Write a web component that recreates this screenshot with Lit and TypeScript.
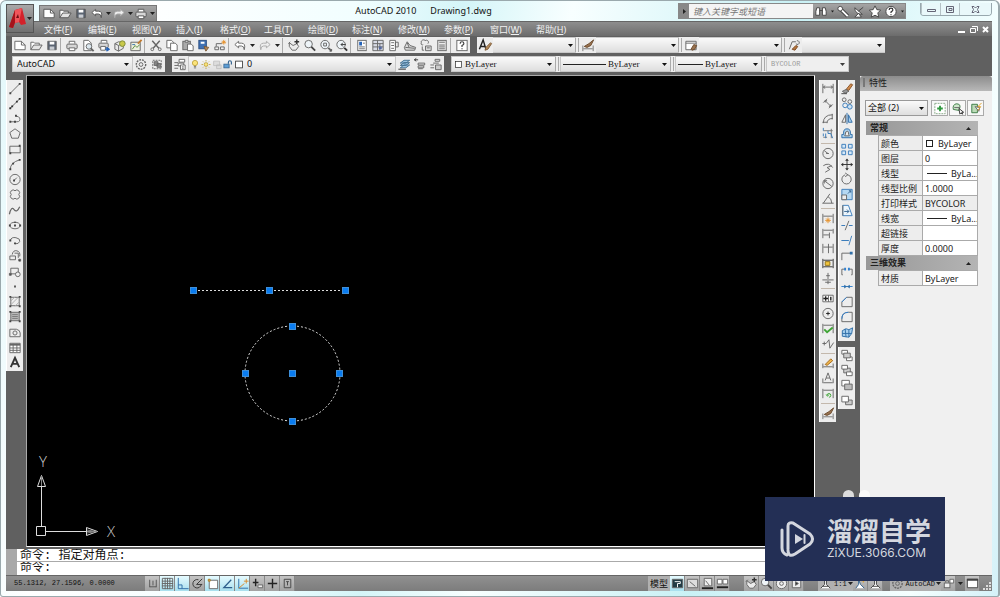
import { LitElement, html, svg, css, nothing } from "lit";
import { customElement, property } from "lit/decorators.js";

const ICONS: Record<string, unknown> = {
  // files
  new: svg`<path d="M2.500 3.500h7l4 4v5h-11z" fill="#fff"/><path d="M9.500 3.500v4h4"/>`,
  open: svg`<path d="M2.500 12.500v-8h3l1 1h5v2" fill="#fff"/><path d="M2.500 12.500l3-5h9l-3 5z" fill="#e4e4e4"/>`,
  save: svg`<path d="M3.500 3.500h9v9h-9z" fill="#5a6472"/><path d="M5.500 4h5v3h-5z" fill="#fff" stroke="none"/><path d="M5.500 9h5v3.500h-5z" fill="#c8ccd2" stroke="none"/>`,
  print: svg`<path d="M5 6V3.500h6V6" fill="#fff"/><rect x="2.500" y="6.500" width="11" height="5" rx="1" fill="#d6d6d6"/><path d="M5 10.500h6v3H5z" fill="#fff"/>`,
  preview: svg`<path d="M3.500 13.500v-11h5l3 3v8z" fill="#fff"/><circle cx="9" cy="9" r="3" fill="#dce8f0"/><path d="M11 11l3 3" stroke-width="2"/>`,
  publish: svg`<path d="M5 5V2.500h6V5" fill="#fff"/><rect x="2.500" y="5.500" width="10" height="5" rx="1" fill="#d6d6d6"/><path d="M4.500 9h5v4h-5z" fill="#fff"/><path d="M9 12h4m-2-2l3 2-3 2z" stroke="#2563b8" fill="#2563b8"/>`,
  dwf: svg`<path d="M2.500 6l4-2 5 1v6l-5 3-4-2z" fill="#e8e8e8"/><path d="M6.500 8v6m0-6l5-3m-5 3l-4-2"/><circle cx="10.500" cy="6" r="3" fill="#c9c94a" stroke="#7d8a3a"/>`,
  map: svg`<path d="M2.500 4.500h10v9h-10z" fill="#eef0e0"/><path d="M4 12l3-4 2 2 3-3" stroke="#5b8a3c"/><path d="M10 6l4-4" stroke="#c07a30" stroke-width="2"/><path d="M4 7h3" stroke="#3d78b0"/>`,
  cut: svg`<path d="M4 3l7 8M12 3l-7 8" stroke-width="1.500"/><circle cx="4" cy="12" r="1.500"/><circle cx="12" cy="12" r="1.500"/>`,
  copyclip: svg`<path d="M2.500 2.500h5l2 2v6h-7z" fill="#fff"/><path d="M6.500 5.500h5l2 2v6h-7z" fill="#fff"/>`,
  paste: svg`<rect x="2.500" y="3.500" width="8" height="9" fill="#aaa"/><path d="M5 2.500h3v2H5z" fill="#eee"/><path d="M7.500 6.500h4l2 2v5h-6z" fill="#fff"/>`,
  match: svg`<rect x="2.500" y="2.500" width="8" height="9" fill="#3f71b3" stroke="#2c4f82"/><path d="M4.500 4h4v2h-4z" fill="#fff" stroke="none"/><path d="M8 9l5 1-3 4z" fill="#b58a5c" stroke="#7c5a34"/>`,
  block: svg`<path d="M2.500 9.500h4v3h-4zM8.500 9.500h4v3h-4z"/><path d="M4 9V6h6"/><path d="M12 2v5M9.500 4.500h5M10.500 3l3 3m0-3l-3 3" stroke="#e5912c"/>`,
  undo: svg`<path d="M6.500 3.500l-4 3.500 4 3.500V8.500h3q3 0 3 4 2-7-3-7h-3z" fill="#fff"/>`,
  redo: svg`<path d="M9.500 3.500l4 3.500-4 3.500V8.500h-3q-3 0-3 4-2-7 3-7h3z" fill="#eee" stroke="#aaa"/>`,
  pan: svg`<path d="M3 5l4 3 4-2 2 3-3 4H6L3 9z" fill="#ececec"/><path d="M11 1.500v5M8.500 4h5" stroke="#333" stroke-width="1.500"/><path d="M2 6l2-2"/>`,
  zoom: svg`<circle cx="6.500" cy="6.500" r="4" fill="#eef4f8"/><path d="M9.500 9.500l4 4" stroke="#444" stroke-width="2"/>`,
  zoomwin: svg`<circle cx="7" cy="7" r="4.500" fill="#eef4f8"/><path d="M5.500 5.500h3v3h-3z"/><path d="M10.500 10.500l3 3" stroke-width="2"/><path d="M14 12v2h-2z" fill="#333"/>`,
  zoomprev: svg`<circle cx="7" cy="7" r="4.500" fill="#eef4f8"/><path d="M10.500 10.500l3 3" stroke="#333" stroke-width="2"/><path d="M12 7H7m2-2L7 7l2 2" stroke="#333"/>`,
  props: svg`<rect x="3.500" y="2.500" width="9" height="11" fill="#fff"/><path d="M5 4h3v4H5z" fill="#2563b8" stroke="none"/><path d="M9 5.500h2M5 9.500h6M5 11.500h6"/>`,
  dcenter: svg`<path d="M2.500 2.500h11v11h-11zM7.500 2.500v11M2.500 6h11M10 6v7M2.500 9.500h11" fill="#d9dce6"/><path d="M9 9h3v3H9z" fill="#5468a0" stroke="none"/>`,
  palettes: svg`<path d="M3.500 2.500h6v11h-6z" fill="#fff"/><path d="M9.500 4.500h3v5h-3zM5 5h3M5 8h3M5 11h3"/>`,
  sheet: svg`<path d="M2 10l3-6 3 4 6 2-1 3H3z" fill="#ddd"/><path d="M3 10l10 1M5 5l2 5"/>`,
  markup: svg`<path d="M3 5c-1-3 4-4 4-2 2-2 5 1 3 3M3 5c-1 2 1 3 2 2"/><path d="M7.500 8.500h6v5h-6zM9 10.500h3" fill="#ddd"/><path d="M4 9v4h2"/>`,
  calc: svg`<rect x="3.500" y="2.500" width="9" height="11" fill="#ececec"/><path d="M5 4.500h6M5 7.500h6M5 9.500h6M5 11.500h6"/>`,
  help: svg`<rect x="2.500" y="2.500" width="11" height="11" fill="#fff"/><path d="M6 6q0-2 2-2t2 2q0 1-2 2v1.500M8 11v1" stroke="#444" stroke-width="1.300"/>`,
  textstyle: svg`<path d="M2 12l4-10 3 10M3 9h5" stroke="#222" stroke-width="1.500"/><path d="M9 10l5-5 1 1-4 6-3 1z" fill="#b58a5c" stroke="#7c5a34"/>`,
  dimstyle: svg`<path d="M2.500 8v6M13.500 8v6M3 11.500h10" stroke="#777"/><path d="M4 9l5-3 5-4-3 6-4 2z" fill="#9a7350" stroke="#6a4a2c"/>`,
  tablestyle: svg`<path d="M2.500 3.500h11v9h-11zM2.500 5.500h11" fill="#fff"/><path d="M8 12l3-5 3 1-2 4-3 1z" fill="#9a7350" stroke="#6a4a2c"/>`,
  leaderstyle: svg`<path d="M3 12l3-8h4M11 3a2 2 0 1 1-1 3"/><path d="M6 12l4-4 2 1-3 4z" fill="#b5763c" stroke="#7c4a24"/>`,
  gear: svg`<circle cx="8" cy="8" r="5" stroke-dasharray="2 1" stroke-width="1.500"/><circle cx="8" cy="8" r="2"/>`,
  wsave: svg`<path d="M3.500 3.500h9v9h-9z" stroke-dasharray="2 1"/><path d="M5 5h4v4H5zM8 7h4v4H8z" fill="#888"/>`,
  layers: svg`<path d="M7 2.500h6v3H7zM6 6.500h6v3H6z" fill="#fff"/><path d="M2 6h4M2 9h4M2 12h4"/><path d="M8.500 8.500h5v5h-5zM10 10.500h2M10 12h2" fill="#fff"/>`,
  bulb: svg`<circle cx="8" cy="6" r="3.500" fill="#fbe47a" stroke="#b79a2c"/><path d="M6.500 10.500h3M6.500 12.500h3" stroke="#555"/>`,
  sun: svg`<circle cx="8" cy="8" r="2.500" fill="#fbe47a" stroke="#b79a2c"/><path d="M8 2v2M8 12v2M2 8h2M12 8h2M4 4l1 1M11 11l1 1M4 12l1-1M11 5l1-1" stroke="#b79a2c"/>`,
  vpfreeze: svg`<path d="M3.500 3.500h8v6h-8zM7.500 8.500h6v5h-6z" fill="#ddd" stroke="#bbb"/>`,
  unlock: svg`<rect x="2.500" y="7.500" width="7" height="5" fill="#5f9fd6" stroke="#2f5f8c"/><path d="M8.500 7V5q0-2 2-2t2 2v3" stroke="#2f5f8c" stroke-width="1.500"/>`,
  swatch: svg`<rect x="3.500" y="3.500" width="9" height="9" fill="#fff" stroke="#222"/>`,
  laycur: svg`<path d="M4 9l4-3h6l-4 3zM4 11.500l4-3h6l-4 3zM4 6.500l4-3h6l-4 3z" fill="#9cc5e4" stroke="#44708f"/><path d="M2 13h8" stroke="#333"/>`,
  layprev: svg`<path d="M6 6.500h7v2H6zM6 9.500h6v2H6zM6 12.500h5"/><path d="M2 3h4M4 1.500L2 3l2 1.500" stroke="#333"/>`,
  laystate: svg`<path d="M7 2.500h5v2H7zM5 6.500h6"/><path d="M2 8.500h4M2 11.500h4"/><path d="M7.500 8.500h6v5h-6z" fill="#ccc"/>`,
  // draw
  line: svg`<path d="M3 13L13 3"/><path d="M2 12h2v2H2zM12 2h2v2h-2z" fill="#444" stroke="none"/>`,
  xline: svg`<path d="M2 14L14 2"/><path d="M4 10h2v2H4zM9 5h2v2H9zM12 2h2v2h-2zM2 12h2v2H2z" fill="#333" stroke="none"/>`,
  pline: svg`<path d="M3 11.500h7q4 0 3-4-1-2-4-2"/><path d="M8 4h2v2H8zM2 10.500h2v2H2zM7 10.500h2v2H7z" fill="#444" stroke="none"/>`,
  polygon: svg`<path d="M8 3l5.500 4-2 6h-7l-2-6z"/>`,
  rect: svg`<path d="M2.500 4.500h11v7h-11z"/><path d="M12 3h2v2h-2zM2 11h2v2H2z" fill="#444" stroke="none"/>`,
  arc: svg`<path d="M3 13q0-7 10-10"/><path d="M2 12h2v2H2zM5 6h2v2H5zM12 2h2v2h-2z" fill="#444" stroke="none"/>`,
  circle: svg`<circle cx="8" cy="8" r="5.500"/><path d="M7 9l3-3"/><path d="M6 8h2v2H6z" fill="#444" stroke="none"/>`,
  cloud: svg`<path d="M8 4a2.700 2.700 0 1 1 4 4 2.700 2.700 0 1 1-4 4 2.700 2.700 0 1 1-4-4 2.700 2.700 0 1 1 4-4z"/>`,
  spline: svg`<path d="M2 12q2-9 5-5t6-3" stroke-width="1.300"/>`,
  ellipse: svg`<ellipse cx="8" cy="8" rx="5.500" ry="3.500"/><path d="M1.500 7h2v2h-2zM7 7h2v2H7zM12.500 7h2v2h-2zM7 4h2v1H7z" fill="#444" stroke="none"/>`,
  elarc: svg`<path d="M3 8q1-4 6-3t4 4q-1 3-5 2.500"/><path d="M2 7h2v2H2zM7 10h2v2H7z" fill="#444" stroke="none"/>`,
  insert: svg`<path d="M2.500 8.500h6v4h-6z"/><path d="M5 7q1-5 5-4t3 6M7.500 5.500h4v5"/><path d="M12 12h2v2h-2z" fill="#222"/>`,
  makeblock: svg`<path d="M3.500 4.500h8v6h-8z"/><circle cx="11" cy="11" r="2.500" fill="#eee"/><path d="M2 10h2v2H2z" fill="#444"/>`,
  point: svg`<path d="M7 7h2v2H7z" fill="#555" stroke="none"/>`,
  hatch: svg`<path d="M3.500 3.500h9v9h-9z"/><path d="M3 8l5-5M3 12l9-9M8 13l5-5" stroke="#aaa"/><path d="M2 2h2v2H2zM12 2h2v2h-2zM2 12h2v2H2zM12 12h2v2h-2z" fill="#444" stroke="none"/>`,
  gradient: svg`<path d="M3.500 3.500h9v9h-9z" fill="#bbb"/><path d="M5 6h6M5 8h6M5 10h6" stroke="#777"/><path d="M2 2h2v2H2zM12 2h2v2h-2zM2 12h2v2H2zM12 12h2v2h-2z" fill="#444" stroke="none"/>`,
  region: svg`<path d="M2.500 4.500h7q4 1 4 4v4h-11z"/><circle cx="8" cy="8.500" r="2.200"/>`,
  table: svg`<path d="M2.500 3.500h11v10h-11z" fill="#fff"/><path d="M2.500 5h11" stroke-width="2"/><path d="M2.500 8.500h11M2.500 11h11M6 4v9M10 4v9"/>`,
  mtext: svg`<path d="M3.500 13L8 3l4.500 10M5 9.500h6" stroke="#333" stroke-width="2"/>`,
  // dimensions
  dlin: svg`<path d="M2.500 3v10M13.500 3v10M3 6.500h10"/><path d="M5 5L3 6.500 5 8M11 5l2 1.500L11 8"/>`,
  dali: svg`<path d="M5 5l6 6M3 7l4-4M9 13l4-4"/><path d="M5 7V5h2M11 9v2H9"/>`,
  darc: svg`<path d="M3 13q0-9 10-9M7 13q0-5 6-5M2 12h5M12.500 3v6"/>`,
  dord: svg`<path d="M3 5h10M3 12h4M11.500 3v10" stroke="#777"/><path d="M3 2v3M5.500 8v5M3 8v3M8 5v3h3l2 5" stroke="#3c7dbb"/>`,
  drad: svg`<circle cx="8" cy="8" r="5.500"/><path d="M8 8L4 5M6 8h3"/>`,
  djog: svg`<path d="M3 5q6-4 10 2M12 5l-5 2 3 2-5 3" />`,
  ddia: svg`<circle cx="8" cy="8" r="5.500"/><path d="M4 5l8 6M4 8V5h3"/>`,
  dang: svg`<path d="M3 13L10 3M2 13h12M8 6q4 2 4 7"/>`,
  quick: svg`<path d="M2.500 3v10M13.500 3v10M3 5.500h10"/><path d="M8 7v6M5 10h6M6 8l4 4m0-4l-4 4" stroke="#e5912c"/>`,
  base: svg`<path d="M2.500 3v10M13.500 3v5M9.500 7v6M3 4.500h10M3 9.500h6"/>`,
  cont: svg`<path d="M2.500 3v10M8.500 3v10M13.500 3v10M3 6.500h10"/>`,
  space: svg`<path d="M2.500 3v10M13.500 3v10M3 4.500h10M3 11.500h10" stroke="#333"/><path d="M5 6h5v4H5z" fill="#f3c53b" stroke="#8f7218"/>`,
  dbreak: svg`<path d="M2 9.500h5M9 9.500h5M8 2v12M6 5h4M5 12h6"/>`,
  tol: svg`<path d="M2.500 4.500h11v7h-11zM8.500 4.500v7" fill="#fff"/><path d="M3 8h5M5.500 5.500v5M11 6v4" stroke="#222" stroke-width="1.500"/>`,
  cmark: svg`<circle cx="8" cy="8" r="5.500"/><path d="M8 6v4M6 8h4" stroke="#222"/>`,
  insp: svg`<path d="M2.500 3v10M13.500 3v10M3 4.500h10"/><path d="M4 9l3 3 6-5" stroke="#3fa535" stroke-width="2"/>`,
  jogl: svg`<path d="M2 8h4M4 6v4M6 8l3-4 1 9 4-6"/>`,
  dedit: svg`<path d="M2.500 8v5M13.500 8v5M3 11.500h10"/><path d="M5 9l6-6 2 2-6 5z" fill="#f0b64c" stroke="#a26a20"/>`,
  dtedit: svg`<path d="M2.500 8v5M13.500 8v5M3 12.500h10"/><path d="M5 10l3-8 3 8M6 7.500h4"/>`,
  dupd: svg`<path d="M2.500 3v10M13.500 3v10M3 4.500h10"/><path d="M7 10a2 2 0 1 1 2 2M6 9l1.500 2L9 9" stroke="#3fa535"/>`,
  // modify
  erase: svg`<path d="M7 9l5-6 2 1-4 6z" fill="#d08c50" stroke="#8b5528"/><path d="M3 11l4-2 3 2-4 2z" fill="#999"/><path d="M2 13.500h6" stroke="#444"/>`,
  copy: svg`<circle cx="5" cy="4" r="2"/><circle cx="11" cy="6" r="2"/><circle cx="6" cy="10" r="2.500" stroke="#3c7dbb"/><circle cx="11" cy="11.500" r="2.500" stroke="#3c7dbb" fill="#cfe4f5"/>`,
  mirror: svg`<path d="M6.500 4v8h-4z"/><path d="M9.500 4v8h4z" fill="#a9d0ee" stroke="#2f6ea8"/><path d="M8 2v12" stroke="#2f6ea8"/>`,
  offset: svg`<path d="M2.500 12.500V9h2q-1-6 3.500-6t3.500 6h2v3.500z" fill="#a9d0ee" stroke="#2f6ea8"/><path d="M5.500 10.500q1-1 1-4 3-2 3 0 0 3 1 4z" fill="#eee"/>`,
  array: svg`<path d="M2.500 2.500h4v4h-4zM9.500 2.500h4v4h-4zM2.500 9.500h4v4h-4zM9.500 9.500h4v4h-4z" stroke="#3c7dbb" fill="#d6e9f8"/>`,
  move: svg`<path d="M8 3v10M3 8h10" stroke="#333"/><path d="M8 1.500L6 4h4zM8 14.500L6 12h4zM1.500 8L4 6v4zM14.500 8L12 6v4z" fill="#333" stroke="none"/>`,
  rotate: svg`<path d="M9 3a5 5 0 1 1-3 0"/><path d="M6 1l3 2-3 2"/>`,
  scale: svg`<path d="M2.500 2.500h11v11h-11z" fill="#b5d8f2" stroke="#3c7dbb"/><path d="M2.500 8.500h5v5h-5z" fill="#eee"/><path d="M9 7l3-3M10 4h2v2" stroke="#2f5f8c"/>`,
  stretch: svg`<path d="M3.500 2.500h6l4 11h-10z" stroke="#3c7dbb" fill="#eef6fc"/><path d="M3.500 2.500v11"/><path d="M5 9h5M8 7l2 2-2 2" stroke="#2f5f8c"/>`,
  trim: svg`<path d="M2 8h4M10 8h4" stroke="#3c7dbb" stroke-width="1.300"/><path d="M10 3L6 13"/>`,
  extend: svg`<path d="M2 8h8" stroke="#3c7dbb" stroke-width="1.300"/><path d="M13 3l-3 10" stroke="#3c7dbb"/>`,
  breakpt: svg`<path d="M2.500 13V5.500H12"/><path d="M11 4h3v3h-3z" fill="#2f6ea8" stroke="none"/>`,
  breakm: svg`<path d="M3.500 11.500h-1v-6h4M9.500 5.500h4v6h-1"/><path d="M5 4h2v3H5zM9 4h2v3H9z" fill="#2f80d0" stroke="none"/>`,
  join: svg`<path d="M2 8h12" stroke="#2f80d0"/><path d="M5 6l3 2-3 2zM11 6L8 8l3 2z" fill="#2f6ea8" stroke="none"/>`,
  chamfer: svg`<path d="M2.500 13.500v-5l5-5h6v10z" /><path d="M2.500 8.500l5-5" stroke="#2f80d0"/>`,
  fillet: svg`<path d="M2.500 13.500v-3q0-7 7-7h4v10z"/><path d="M2.500 10.500q0-7 7-7" stroke="#2f80d0"/>`,
  explode: svg`<path d="M3 6l4-2 3 1 4-2-1 6-3 4-7-1z" fill="#a9d0ee" stroke="#2f6ea8"/><path d="M6 4l1 9M10 5v8M3 9h10" stroke="#2f6ea8"/>`,
  front: svg`<path d="M2.500 2.500h6v4h-6zM7.500 9.500h6v4h-6z" fill="#fff"/><path d="M4.500 5.500h7v5h-7z" fill="#ccc"/>`,
  back: svg`<path d="M4.500 5.500h7v5h-7z" fill="#ccc"/><path d="M2.500 2.500h6v4h-6zM7.500 9.500h6v4h-6z" fill="#fff"/>`,
  above: svg`<path d="M2.500 2.500h8v6h-8z" fill="#fff"/><path d="M5.500 6.500h8v6h-8z" fill="#bbb"/>`,
  under: svg`<path d="M6.500 7.500h7v5h-7z" fill="#ccc"/><path d="M2.500 3.500h7v6h-7z" fill="#fff"/>`,
  // palette buttons
  pick: svg`<path d="M2.500 2.500h11v11h-11z" fill="#fff" stroke="#8a8" stroke-dasharray="2 1"/><path d="M8 5v6M5 8h6" stroke="#2f9a3f" stroke-width="2"/>`,
  selobj: svg`<path d="M3 9q-1-5 3-6 5 0 4 4l-1 3z" fill="#cfe8cc" stroke="#3b7a44"/><path d="M4 7h6"/><path d="M9 8l5 4h-2l1 2-2-1-1 1z" fill="#fff" stroke="#333"/>`,
  qsel: svg`<path d="M3.500 3.500h6v9h-6z" fill="#bcdcb8" stroke="#3b7a44"/><path d="M7 6l4 5 1-4z" fill="#fff"/><path d="M14 2l-4 4h3l-3 4" stroke="#e0a02c"/>`,
  // info center
  bino: svg`<path d="M3.500 4h3v8h-4v-4zM9.500 4h3l1 4v4h-4zM6.500 7h3" fill="#fff" stroke="#444"/>`,
  key: svg`<path d="M6 6l7 7" stroke="#444" stroke-width="4"/><path d="M6 6l7 7" stroke="#fff" stroke-width="2"/><circle cx="5" cy="5" r="2.500" fill="#fff" stroke="#444"/>`,
  dish: svg`<path d="M3.500 4q0 7 8 7z" fill="#fff" stroke="#444"/><path d="M7.500 7.500l5-4" stroke="#444"/><path d="M3.500 14h7l-3-4z" fill="#fff" stroke="#444"/>`,
  star: svg`<path d="M8 2l2 4 4 .500-3 3 1 4.500-4-2-4 2 1-4.500-3-3L6 6z" fill="#fff" stroke="#444"/>`,
  helpc: svg`<circle cx="8" cy="8" r="5.500" fill="#fff" stroke="#444"/><path d="M6 6.500q0-2 2-2t2 2q0 1-2 2v1M8 11v1" stroke="#333" stroke-width="1.300"/>`,
  // status
  snap: svg`<path d="M5 4v8M5 11.500h7M12 4v8M8.500 5v5" stroke="#555"/>`,
  grid: svg`<path d="M2.500 2.500h11v11h-11zM5.500 2v12M8 2v12M10.500 2v12M2 5.500h12M2 8h12M2 10.500h12" stroke="#666"/>`,
  ortho: svg`<path d="M3.500 2v11.500h11M3.500 9.500h4v4" stroke="#2f6ea8"/>`,
  polar: svg`<path d="M12 9a4.500 4.500 0 1 1-3-5" stroke="#333"/><path d="M7 9l6-6M7 9h6" stroke="#333"/>`,
  osnap: svg`<path d="M4.500 4.500h9v9h-9z" fill="#fff"/><path d="M3.500 3.500h2v2h-2z" fill="#f0c060" stroke="#a77b22"/>`,
  otrack: svg`<path d="M12 4l-8 8.500h9" stroke="#2f5f8c" stroke-width="1.300"/>`,
  ducs: svg`<path d="M4 3v10h10" stroke="#2f6ea8"/><path d="M4 13l6-5M12 3v5M9.500 5.500h5" stroke="#d98a2a"/>`,
  dyn: svg`<path d="M6 3v8M3 7h6" stroke="#222" stroke-width="1.500"/><path d="M8.500 9.500h5v3h-5z" fill="#eee"/>`,
  lwt: svg`<path d="M8 3v10M3 8h10" stroke="#222" stroke-width="1.500"/>`,
  qp: svg`<path d="M4.500 3.500h7v9h-7zM8 6v4M6.500 6h3" stroke="#444"/>`,
  model: svg`<path d="M2.500 3.500h11v9h-11z" fill="#223c46"/><path d="M5 6h6v2H8v4" stroke="#fff"/>`,
  layout: svg`<path d="M2.500 3.500h11v9h-11z" fill="#ddd"/><path d="M5 6l6 5"/>`,
  qvl: svg`<path d="M4.500 2.500h8v8h-8z" fill="#eee"/><path d="M6 5l4 5"/><path d="M2 13h12" stroke="#222" stroke-width="2"/>`,
  qvd: svg`<path d="M2.500 3.500h5v5h-5zM8.500 3.500h5v5h-5z" fill="#fff"/><path d="M2 12h12" stroke="#222" stroke-width="2"/>`,
  wheel: svg`<circle cx="8" cy="8" r="5.500" fill="#eee"/><circle cx="8" cy="8" r="2"/>`,
  motion: svg`<path d="M3.500 3.500h9v9h-9z" fill="#eee"/><path d="M7 6l3 2-3 2z" fill="#333"/>`,
  anno: svg`<path d="M3 13l4-4V3h2v6l4 4M5 11h6" fill="#fff" stroke="#444"/>`,
  annov: svg`<path d="M3 13l3-4V4l2 5 4 4" fill="#fff" stroke="#2f5f8c"/><path d="M11 3v4M9 5h4" stroke="#e0a02c"/>`,
  lock: svg`<rect x="3.500" y="7.500" width="6" height="5" fill="#eee"/><path d="M5 7V5h3v2"/><path d="M9.500 3.500h4v4h-4z" fill="#fff"/>`,
  clean: svg`<path d="M2.500 3.500h11v9h-11z" fill="#fff" stroke="#444"/><path d="M2 4h12" stroke="#444" stroke-width="2"/>`,
};

const icon = (name: string) => html`<svg class="ic" viewBox="0 0 16 16" aria-hidden="true">${ICONS[name]}</svg>`;
const ib = (name: string, cls = "") => html`<button class="ib ${cls}" aria-label=${name}>${icon(name)}</button>`;
const arrow = html`<svg class="dd" viewBox="0 0 5 3" aria-hidden="true"><path d="M0 0h5L2.500 3z" /></svg>`;
const sep = html`<span class="sep"></span>`;
const ddb = (name: string) => html`<button class="ddb" aria-label=${name}>${arrow}</button>`;

/** Renders a run of tool names: "|" is a separator, "v" an attached drop-down. */
const run = (spec: string) =>
  spec.split(" ").map((n) => (n === "|" ? sep : n === "v" ? ddb("more") : ib(n)));

const combo = (cls: string, label: string, value: string, lead: unknown = nothing) => html`
  <label class="combo ${cls}">${lead}<select aria-label=${label}><option>${value}</option></select></label>`;

const shared = css`
  :host { box-sizing: border-box; }
  *, *::before, *::after { box-sizing: border-box; }
  button { appearance: none; border: 0; padding: 0; margin: 0; background: none; font: inherit; color: inherit; }
  .ic { width: 16px; height: 15px; display: block; fill: none; stroke: #666; stroke-width: 1; flex: none; }
  .ib { width: 16px; height: 15px; display: grid; place-items: center; flex: none; }
  .dd { width: 5px; height: 3px; fill: #222; display: block; }
  .ddb { width: 9px; height: 15px; display: grid; place-items: center; flex: none; }
  .sep { width: 4px; height: 15px; flex: none; border-left: 1px solid #aaa; margin-left: 0; }
  .combo { display: flex; align-items: center; min-width: 0; height: 16px; background: linear-gradient(#fafafa, #dedede); border: 1px solid #c8c8c8; }
  .combo select {
    appearance: none; border: 0; margin: 0; padding: 0 12px 0 4px; flex: 1; min-width: 0; height: 14px; border-radius: 0; outline: 0;
    font: inherit; color: #111; background: url("data:image/svg+xml,%3Csvg xmlns='http://www.w3.org/2000/svg' width='5' height='3'%3E%3Cpath d='M0 0h5L2.500 3z' fill='%23111'/%3E%3C/svg%3E") no-repeat right 3px center;
  }
`;

@customElement("tool-column")
class ToolColumn extends LitElement {
  @property({ attribute: false }) groups: string[][] = [];
  @property({ type: Boolean, reflect: true }) ruled = false;
  static styles = [shared, css`
    :host { display: flex; flex-direction: column; width: 17px; padding: 1px 0; gap: 1px; background: #ededed; border: 0 solid #fff; border-left-width: 1px; }
    :host([ruled]) { gap: 5px; }
    .group { display: flex; flex-direction: column; position: relative; }
    :host([ruled]) .group + .group::before { content: ""; position: absolute; left: 1px; right: 1px; top: -3px; border-top: 1px solid #c3b8ac; }
  `];
  render() {
    return this.groups.map((g) => html`<div class="group">${g.map((n) => ib(n))}</div>`);
  }
}

@customElement("props-palette")
class PropsPalette extends LitElement {
  static styles = [shared, css`
    :host { display: block; background: #f0f0f0; font: 9px/14px "Noto Sans", "Noto Sans CJK SC", sans-serif; color: #222; }
    .title { height: 15px; padding-left: 3px; display: flex; gap: 4px; background: linear-gradient(#8c8c8c, #b8b8b8); border-radius: 3px 3px 0 0; }
    .title::before { content: ""; width: 2px; height: 9px; margin-top: 2px; border: 1px solid #777; border-width: 0 1px; }
    .bar { display: flex; gap: 1px; padding: 9px 8px 5px 5px; align-items: center; }
    .combo { flex: 1; margin-right: 2px; border-color: #999; }
    .combo select { padding-left: 2px; }
    .ib { width: 17px; height: 16px; border: 1px solid #aaa; background: #f8f8f8; }
    .sheet { margin: 0 14px 0 6px; }
    table { width: 100%; border-collapse: collapse; table-layout: fixed; }
    .head { width: 100%; height: 14px; padding: 0 7px 0 4px; display: flex; justify-content: space-between; align-items: center; background: linear-gradient(90deg, #989898, #b4b4b4); font-weight: bold; }
    .head .dd { transform: rotate(180deg); }
    .rows { padding-left: 12px; }
    th, td { height: 15px; padding: 0 0 0 2px; border: 1px solid #aaa; font-weight: normal; text-align: left; line-height: 13px; white-space: nowrap; overflow: hidden; }
    th { width: 44px; background: #ededed; }
    td { background: #fff; }
    td.off { background: #ededed; }
    .line { display: inline-block; width: 20px; height: 1px; background: #222; vertical-align: 3px; margin: 0 4px 0 2px; }
    .box { display: inline-block; width: 7px; height: 7px; border: 1px solid #222; margin: 0 5px 0 1px; }
  `];
  private section(name: string, rows: [string, unknown, string?][]) {
    return html`
      <button class="head"><span>${name}</span>${arrow}</button>
      <div class="rows"><table>${rows.map(([k, v, c]) => html`<tr><th scope="row">${k}</th><td class=${c ?? ""}>${v}</td></tr>`)}</table></div>`;
  }
  render() {
    const dash = html`<span class="line"></span>`;
    return html`
      <div class="title">特性</div>
      <div class="bar">${combo("", "选择", "全部 (2)")}${ib("pick")}${ib("selobj")}${ib("qsel")}</div>
      <div class="sheet">
        ${this.section("常规", [
          ["颜色", html`<span class="box"></span>ByLayer`],
          ["图层", "0"],
          ["线型", html`${dash}ByLa...`],
          ["线型比例", "1.0000"],
          ["打印样式", "BYCOLOR", "off"],
          ["线宽", html`${dash}ByLa...`],
          ["超链接", ""],
          ["厚度", "0.0000"],
        ])}
        ${this.section("三维效果", [["材质", "ByLayer"]])}
      </div>`;
  }
}

@customElement("drawing-area")
class DrawingArea extends LitElement {
  static styles = css`
    :host { display: block; position: relative; background: #000; overflow: hidden; }
    svg { position: absolute; left: 0; fill: none; stroke: #ddd; }
    .model { top: 0; width: 400px; height: 360px; }
    .ucs { bottom: 0; width: 100px; height: 100px; }
    .ent { stroke-dasharray: 2 2; }
    .grip { fill: #0a7cf0; stroke: #3f8fd8; }
    text { fill: #ccc; stroke: none; font: 300 15px "Open Sans", sans-serif; text-anchor: middle; }
  `;
  render() {
    const grips = [[166, 214], [242, 214], [318, 214], [265, 250], [265, 297], [218, 297], [312, 297], [265, 345]];
    return html`
      <svg class="model" viewBox="0 0 400 360">
        <path class="ent" d="M167 214.500h152" />
        <circle class="ent" cx="265.500" cy="297.500" r="47.500" />
        ${grips.map(([x, y]) => svg`<rect class="grip" x=${x - 2.5} y=${y - 2.5} width="6" height="6"/>`)}
      </svg>
      <svg class="ucs" viewBox="0 0 100 100">
        <path d="M9.500 80.500h9v9h-9zM14.500 80V34M19 85.500h51" />
        <path d="M10.500 40.500l4-11 4 11zM59.500 81.500l11 4-11 4z" />
        <path d="M14.500 30v10M60 85.500h10M60 84l9 1.500-9 1.500" stroke="#888" />
        <text x="16" y="21">Y</text><text x="84" y="91">X</text>
      </svg>`;
  }
}

const MENUS: [string, string][] = [
  ["文件", "F"], ["编辑", "E"], ["视图", "V"], ["插入", "I"], ["格式", "O"], ["工具", "T"],
  ["绘图", "D"], ["标注", "N"], ["修改", "M"], ["参数", "P"], ["窗口", "W"], ["帮助", "H"],
];

@customElement("app-root")
class AppRoot extends LitElement {
  static styles = [shared, css`
    :host {
      display: flex; flex-direction: column; height: 100vh; position: relative; padding: 0 6px 5px 5px; overflow: hidden;
      font: 9px/14px "Noto Sans", "Noto Sans CJK SC", sans-serif; color: #111;
      background: linear-gradient(100deg, #e2f8fb 0%, #fff 12%, #f2feff 32%, #d4f5f8 42%, #f8ffff 52%, #c9f1f5 72%, #f5ffff 92%, #d4f1f8 100%);
      border: 1px solid #9aa9ad; border-width: 1px 2px 1px 1px; border-radius: 6px 6px 3px 3px;
    }
    .head { display: grid; grid-template-columns: 33px 1fr; grid-template-rows: 20px 15px; flex: none; }
    .app { grid-area: 1 / 1 / 3 / 2; z-index: 1; width: 28px; height: 29px; margin-top: 3px; display: flex; align-items: center; background: linear-gradient(#a8a8a8, #707070); border: 1px solid #555; }
    .app .logo { width: 20px; height: 25px; }
    .title { grid-area: 1 / 2; display: flex; align-items: center; justify-content: space-between; }
    .qat { display: flex; align-items: center; height: 17px; padding: 0 1px; margin-top: 4px; background: linear-gradient(#a5a5a5, #858585); border: 1px solid #777; }
    .qat .ddb { width: 6px; }
    .qat .ic { stroke: #555; }
    .name { margin: 0; font-size: 9px; font-weight: normal; white-space: pre; padding-left: 12px; }
    .search { display: flex; align-items: center; height: 16px; border: 1px solid #888; }
    .search .go { width: 10px; height: 14px; background: #888; display: grid; place-items: center; }
    .search .go .dd { transform: rotate(-90deg); }
    .search input { width: 124px; height: 14px; padding: 0 4px; border: 0; border-radius: 0; background: #f4f4f4; font: italic 9px "Noto Sans", "Noto Sans CJK SC", sans-serif; }
    .search input::placeholder { color: #777; opacity: 1; }
    .info { display: flex; align-items: center; height: 14px; padding: 0; background: linear-gradient(#a5a5a5, #7b7b7b); }
    .info .ddb { width: 6px; }
    .info .dd { width: 3px; }
    .spacer { flex: 1; }
    .right { display: flex; gap: 14px; }
    .win { display: flex; height: 13px; border: 1px solid #98a8ae; border-top: 0; border-radius: 0 0 4px 4px; overflow: hidden; }
    .win button { width: 19px; display: grid; place-items: center; border-left: 1px solid #b5c2c6; background: #e9f8fa; }
    .win button:last-child { width: 32px; }
    .win svg, .mdi svg { width: 11px; height: 9px; fill: none; stroke: #667; }
    nav { grid-area: 2 / 1 / 3 / 3; display: flex; align-items: center; padding-left: 38px; background: linear-gradient(#8e8e8e, #6c6c6c); border-top: 1px solid #666; color: #f2f2f2; }
    nav .item { width: 44px; text-align: left; line-height: 13px; white-space: nowrap; }
    nav .item.wide { width: 46px; }
    .mdi { margin-left: auto; display: flex; gap: 1px; padding-right: 1px; }
    .mdi svg { stroke: #fff; stroke-width: 2; display: block; }
    .mdi .thin { stroke-width: 1; }

    .bars { flex: none; background: #606060; padding: 1px 0 3px 6px; display: grid; gap: 3px; }
    .row { display: flex; gap: 7px; height: 16px; }
    .bar { display: flex; align-items: center; background: #ededed; height: 16px; }
    .bar > .ib { height: 16px; }
    .grip { width: 4px; height: 14px; border: 1px solid #aaa; border-width: 0 1px; flex: none; margin: 0 1px 0 -1px; }
    .style { width: 83px; border-width: 1px 0; }
    .ws { width: 121px; }
    .layer { width: 208px; gap: 0; }
    .layer .ic { width: 12px; margin-right: -1px; }
    .layer select { padding-left: 3px; }
    .ser { font-family: "Liberation Serif", serif; }
    .col { width: 105px; }
    .col .ic { width: 11px; margin-left: 1px; }
    .col select { padding-left: 1px; }
    .lt { width: 111px; } .lt .rule { width: 43px; }
    .lw { width: 87px; } .lw .rule { width: 25px; }
    .lw select { padding-left: 2px; }
    .lt select { padding-left: 2px; }
    .rule { height: 1px; background: #222; margin-left: 2px; flex: none; }
    .pc { width: 83px; font: 7px "Liberation Mono", monospace; background: #efefef; }
    .pc select { color: #888; opacity: .8; }

    .work { flex: 1; display: flex; min-height: 0; background: #606060; }
    .main { flex: 1; display: flex; flex-direction: column; min-width: 0; }
    .stage { flex: 1; display: flex; min-height: 0; }
    tool-column { flex: none; }
    .left { padding: 5px 3px 0 0; display: flex; align-items: flex-start; }
    drawing-area { flex: 1; border: 1px solid #aaa; border-right-color: #fff; border-bottom-color: #fff; }
    .docks { display: flex; gap: 2px; align-items: flex-start; padding: 5px 5px 0 4px; }
    .stack { display: flex; flex-direction: column; gap: 6px; }
    props-palette { width: 132px; flex: none; margin-top: 1px; }
    .cmd { flex: none; display: grid; grid-template-columns: 11px 1fr; margin-top: 2px; background: #a8a8a8; }
    .cmd .hist, .cmd input { font: 12px/15px "Liberation Mono", "Noto Sans CJK SC", monospace; color: #111; background: #fff; padding: 0 0 0 3px; white-space: pre; }
    .cmd .hist { height: 13px; overflow: hidden; border-bottom: 1px solid #aaa; grid-column: 2; }
    .cmd input { height: 13px; width: 100%; border: 0; border-radius: 0; grid-column: 2; }

    .status { flex: none; height: 16px; display: flex; align-items: center; background: linear-gradient(#909090, #7c7c7c); border-top: 1px solid #666; }
    .coords { width: 139px; padding-left: 8px; font: 7px/15px "Liberation Mono", monospace; white-space: pre; }
    .status .ib, .status .ic { width: 15px; }
    .status .ib { height: 15px; background: linear-gradient(#c4c4c4, #a2a2a2); border-right: 1px solid #888; }
    .status .ib.on { background: linear-gradient(#e6fbff, #a8dfee); }
    .txt { height: 15px; padding: 0 2px; background: #b0b0b0; display: flex; align-items: center; gap: 4px; white-space: nowrap; }
    .mono { font: 7px "Liberation Mono", monospace; padding: 0; gap: 1px; }
    .cluster { display: flex; margin-right: 14px; }
    .cluster.near { margin-right: 7px; }
    .cluster.end { margin-right: 2px; }
    .tips { width: 10px; height: 10px; align-self: flex-end; fill: #ddd; }

    .mark { position: absolute; right: 53px; bottom: 15px; width: 180px; height: 84px; background: #232f55; display: flex; align-items: center; gap: 12px; padding-left: 15px; color: #d4d7df; }
    .mark .play { width: 35px; height: 38px; fill: none; stroke: #d4d7df; stroke-width: 3; stroke-linejoin: round; stroke-linecap: round; flex: none; }
    .mark strong { display: block; font: 700 26px/28px "Liberation Sans", "Noto Sans CJK SC", sans-serif; white-space: nowrap; }
    .mark span { display: block; font: 12px/14px "Inter", sans-serif; white-space: nowrap; }
    .mark::before { content: ""; position: absolute; left: 78px; top: -7px; width: 11px; height: 7px; border-radius: 6px 6px 0 0; background: #ddd; box-shadow: 16px 0 #fafafa; }
  `];

  render() {
    const line = html`<span class="rule"></span>`;
    return html`
      <header class="head">
        <button class="app" aria-label="AutoCAD">
          <svg class="logo" viewBox="0 0 20 25"><path d="M2 21L8 4l7-2 4 16-5 1-2-3-4 1-2 5z" fill="#d3222a"/><path d="M8 4l7-2-3 14-4 1z" fill="#f0555a"/><path d="M9 12l2-4 1 4z" fill="#6d0e12"/><path d="M2 21l6-17 0 12-2 6z" fill="#a4141b"/></svg>
          ${arrow}
        </button>
        <div class="title">
          <div class="qat">${run("new open save undo v redo v print v")}</div>
          <span class="spacer"></span>
          <h1 class="name">AutoCAD 2010      Drawing1.dwg</h1>
          <span class="spacer"></span>
          <div class="right">
            <form class="search" role="search">
              <button type="button" class="go" aria-label="展开">${arrow}</button>
              <input type="search" aria-label="搜索" placeholder="键入关键字或短语" />
              <div class="info">${run("bino v key dish star helpc v")}</div>
            </form>
            <div class="win">
              <button aria-label="最小化"><svg viewBox="0 0 11 9"><path d="M1.500 4.500h8v2h-8z"/></svg></button>
              <button aria-label="还原"><svg viewBox="0 0 11 9"><path d="M1.500 1.500h7v6h-7zM4 3.500h3v2H4z"/></svg></button>
              <button aria-label="关闭"><svg viewBox="0 0 11 9"><path d="M2 1.500h2l1.500 1.500L7 1.500h2L7.500 4.500 9 7.500H7L5.500 6 4 7.500H2l1.500-3z"/></svg></button>
            </div>
          </div>
        </div>
        <nav>
          ${MENUS.map(([t, k]) => html`<button class="item ${"MPNW".includes(k) ? "wide" : ""}">${t}(<u>${k}</u>)</button>`)}
          <div class="mdi">
            <button aria-label="最小化文档"><svg viewBox="0 0 11 9"><path d="M2 7h7"/></svg></button>
            <button aria-label="还原文档"><svg class="thin" viewBox="0 0 11 9"><path d="M2.500 3.500h5v4h-5zM4 1.500h5.500V6"/></svg></button>
            <button aria-label="关闭文档"><svg viewBox="0 0 11 9"><path d="M3 2l5 5M8 2L3 7"/></svg></button>
          </div>
        </nav>
      </header>

      <div class="bars">
        <div class="row">
          <div class="bar">${run("new open save | print preview publish dwf map | cut copyclip paste match block | undo v redo v | pan zoom zoomwin zoomprev | props dcenter palettes sheet markup calc | help")}</div>
          <div class="bar">
            ${ib("textstyle")}${combo("style", "文字样式", "")}
            <span class="grip"></span>${ib("dimstyle")}${combo("style", "标注样式", "")}
            <span class="grip"></span>${ib("tablestyle")}${combo("style", "表格样式", "")}
            <span class="grip"></span>${ib("leaderstyle")}${combo("style", "引线样式", "")}
          </div>
        </div>
        <div class="row">
          <div class="bar">${combo("ws", "工作空间", "AutoCAD")}${ib("gear")}${ib("wsave")}</div>
          <div class="bar">
            ${ib("layers")}
            ${combo("layer", "图层", "0", html`${["bulb", "sun", "vpfreeze", "unlock", "swatch"].map((n) => icon(n))}`)}
            ${run("laycur layprev laystate")}
          </div>
          <div class="bar ser">
            ${combo("col", "颜色", "ByLayer", icon("swatch"))}<span class="grip"></span>
            ${combo("lt", "线型", "ByLayer", line)}<span class="grip"></span>
            ${combo("lw", "线宽", "ByLayer", line)}<span class="grip"></span>
            ${combo("pc", "打印样式", "BYCOLOR")}
          </div>
        </div>
      </div>

      <div class="work">
        <div class="main">
          <div class="stage">
            <div class="left"><tool-column .groups=${[
              ["line", "xline", "pline", "polygon"], ["rect", "arc", "circle", "cloud"], ["spline", "ellipse", "elarc", "insert"],
              ["makeblock", "point", "hatch", "gradient"], ["region", "table", "mtext"],
            ]}></tool-column></div>
            <drawing-area></drawing-area>
            <div class="docks">
              <tool-column ruled .groups=${[
                ["dlin", "dali", "darc", "dord"], ["drad", "djog", "ddia", "dang"], ["quick", "base", "cont", "space", "dbreak"],
                ["tol", "cmark", "insp", "jogl"], ["dedit", "dtedit", "dupd"], ["dimstyle"],
              ]}></tool-column>
              <div class="stack">
                <tool-column .groups=${[
                  ["erase", "copy", "mirror", "offset"], ["array", "move", "rotate", "scale"], ["stretch", "trim", "extend", "breakpt"],
                  ["breakm", "join", "chamfer", "fillet"], ["explode"],
                ]}></tool-column>
                <tool-column .groups=${[["front", "back", "above", "under"]]}></tool-column>
              </div>
            </div>
          </div>
          <div class="cmd">
            <div class="hist">命令: 指定对角点:</div>
            <input aria-label="命令行" value="命令:" />
          </div>
        </div>
        <props-palette></props-palette>
      </div>

      <footer class="status">
        <span class="coords">55.1312, 27.1596, 0.0000</span>
        ${ib("snap")}${ib("grid", "on")}${ib("ortho", "on")}${ib("polar")}${ib("osnap", "on")}${ib("otrack", "on")}${ib("ducs", "on")}${ib("dyn")}${ib("lwt")}${ib("qp")}
        <span class="spacer"></span>
        <div class="cluster"><button class="txt">模型</button>${ib("model", "on")}${ib("layout")}${ib("qvl")}${ib("qvd")}</div>
        <div class="cluster">${run("pan zoom wheel motion")}</div>
        <div class="cluster near"><button class="txt mono">${icon("anno")}1:1 ${arrow}</button>${ib("annov")}${ib("anno")}</div>
        <div class="cluster end"><button class="txt mono">${icon("gear")}AutoCAD ${arrow}</button>${ib("lock")}${ddb("menu")}${ib("clean")}</div>
        <svg class="tips" viewBox="0 0 10 10"><path d="M7 1h2v2H7zM4 4h2v2H4zM7 4h2v2H7zM1 7h2v2H1zM4 7h2v2H4zM7 7h2v2H7z"/></svg>
      </footer>

      <aside class="mark">
        <svg class="play" viewBox="0 0 35 38"><path d="M2 10v18q0 5 5 7"/><path d="M8 29V6q0-4 5-3l17 11q5 5 0 10L15 34q-7 4-7-4"/><path d="M15 14l8 5-8 5z" fill="#d4d7df" stroke="none"/><path d="M24.500 15v8" stroke-width="2"/></svg>
        <div><strong>溜溜自学</strong><span>ZiXUE.3066.COM</span></div>
      </aside>`;
  }
}
